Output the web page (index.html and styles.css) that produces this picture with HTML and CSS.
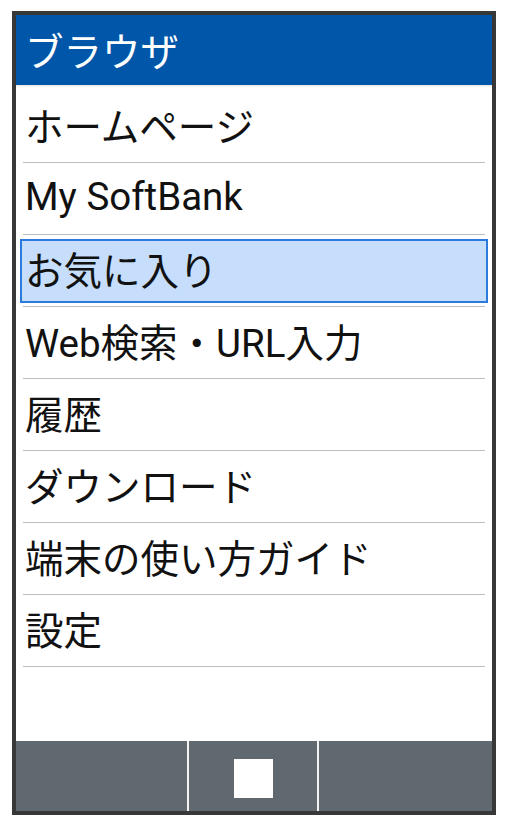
FILE: index.html
```html
<!DOCTYPE html>
<html lang="ja">
<head>
    <meta charset="UTF-8">
    <meta name="viewport" content="width=device-width, initial-scale=1.0">
    <title>ブラウザ</title>
    <link rel="stylesheet" href="styles.css">
</head>
<body>
    <div class="phone">
        <header class="title-bar">
            <h1>ブラウザ</h1>
        </header>

        <ul class="menu">
            <li class="menu-item"><span class="label">ホームページ</span></li>
            <li class="menu-item"><span class="label">My SoftBank</span></li>
            <li class="menu-item selected"><span class="label">お気に入り</span></li>
            <li class="menu-item"><span class="label">Web検索・URL入力</span></li>
            <li class="menu-item"><span class="label">履歴</span></li>
            <li class="menu-item"><span class="label">ダウンロード</span></li>
            <li class="menu-item"><span class="label">端末の使い方ガイド</span></li>
            <li class="menu-item"><span class="label">設定</span></li>
        </ul>

        <footer class="soft-keys">
            <div class="key key-left"></div>
            <div class="key key-center"><span class="stop-icon"></span></div>
            <div class="key key-right"></div>
        </footer>
    </div>
</body>
</html>
```

FILE: styles.css
```css
body {
    margin: 0;
    padding: 0;
    background: #fff;
    font-family: Roboto, "Noto Sans CJK JP", sans-serif;
}
.phone {
    margin: 11px 0 0 12px;
    width: 484px;
    height: 804px;
    box-sizing: border-box;
    border: 4px solid #383838;
    display: flex;
    flex-direction: column;
    background: #fff;
}
.title-bar {
    height: 70px;
    background: #0056a9;
    display: flex;
    align-items: center;
    padding-left: 9px;
    box-shadow: 0 1px 2px rgba(0, 0, 0, 0.12);
}
.title-bar h1 {
    margin: 0 0 2px;
    color: #fff;
    font-size: 38.5px;
    font-weight: 400;
    font-family: "Noto Sans CJK JP", sans-serif;
}
.menu {
    list-style: none;
    margin: 0;
    padding: 6px 0 0;
    flex: 1;
}
.menu-item {
    margin: 0 7px;
    padding: 4px 0 3px;
    border-bottom: 1px solid #bdbdbd;
}
.label {
    display: flex;
    align-items: center;
    height: 64px;
    box-sizing: border-box;
    margin: 0 -3px;
    padding: 0 0 6px 3px;
    border: 2px solid transparent;
    font-size: 38.5px;
    color: #111;
}
.menu-item.selected .label {
    background: #c6defc;
    border-color: #2b7bdc;
}
.soft-keys {
    height: 70px;
    display: flex;
    gap: 2px;
    background: #f2f2f2;
}
.key {
    background: #616970;
    display: flex;
    align-items: center;
    justify-content: center;
}
.key-left {
    width: 171px;
}
.key-center {
    width: 128px;
}
.key-right {
    flex: 1;
}
.stop-icon {
    width: 39px;
    height: 39px;
    margin-top: 5px;
    background: #fff;
}
```
